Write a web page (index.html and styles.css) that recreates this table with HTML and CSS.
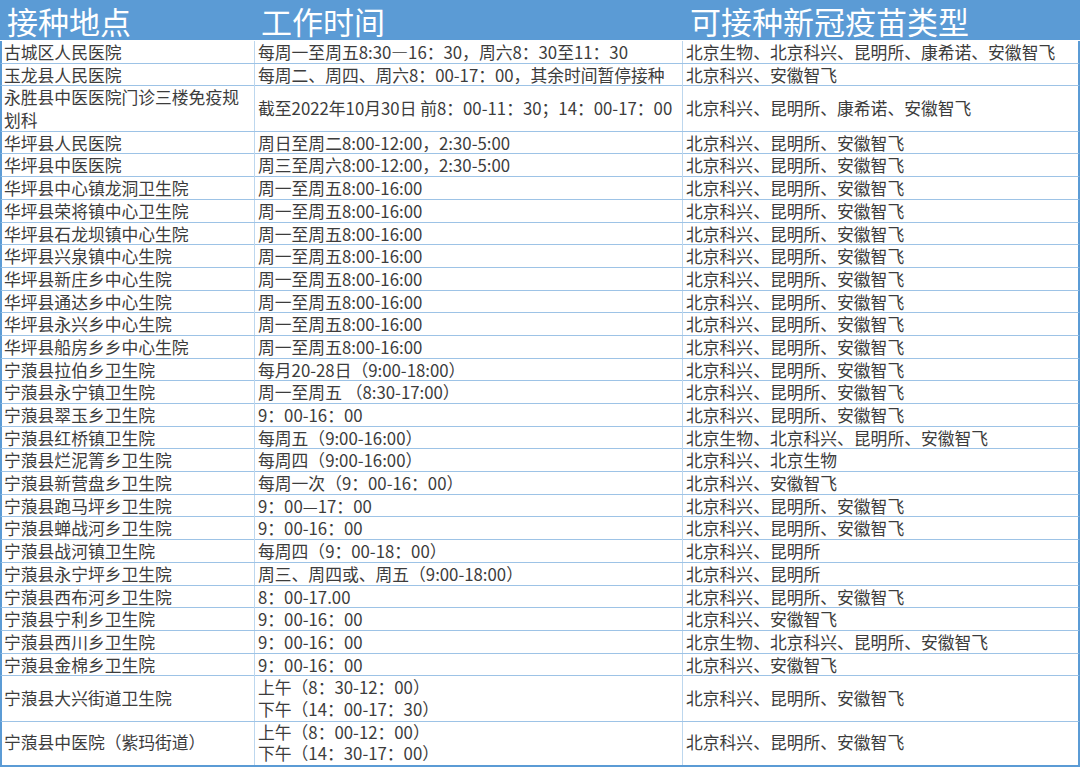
FILE: index.html
```html
<!DOCTYPE html>
<html lang="zh-CN">
<head>
<meta charset="utf-8">
<title>接种地点</title>
<link rel="stylesheet" href="styles.css">
</head>
<body>
<div class="sheet">
  <div class="row head">
    <div class="cell">接种地点</div>
    <div class="cell">工作时间</div>
    <div class="cell">可接种新冠疫苗类型</div>
  </div>
  <div class="row"><div class="cell">古城区人民医院</div><div class="cell">每周一至周五8:30—16：30，周六8：30至11：30</div><div class="cell">北京生物、北京科兴、昆明所、康希诺、安徽智飞</div></div>
  <div class="row"><div class="cell">玉龙县人民医院</div><div class="cell">每周二、周四、周六8：00-17：00，其余时间暂停接种</div><div class="cell">北京科兴、安徽智飞</div></div>
  <div class="row dbl"><div class="cell">永胜县中医医院门诊三楼免疫规<br>划科</div><div class="cell">截至2022年10月30日 前8：00-11：30；14：00-17：00</div><div class="cell">北京科兴、昆明所、康希诺、安徽智飞</div></div>
  <div class="row"><div class="cell">华坪县人民医院</div><div class="cell">周日至周二8:00-12:00，2:30-5:00</div><div class="cell">北京科兴、昆明所、安徽智飞</div></div>
  <div class="row"><div class="cell">华坪县中医医院</div><div class="cell">周三至周六8:00-12:00，2:30-5:00</div><div class="cell">北京科兴、昆明所、安徽智飞</div></div>
  <div class="row"><div class="cell">华坪县中心镇龙洞卫生院</div><div class="cell">周一至周五8:00-16:00</div><div class="cell">北京科兴、昆明所、安徽智飞</div></div>
  <div class="row"><div class="cell">华坪县荣将镇中心卫生院</div><div class="cell">周一至周五8:00-16:00</div><div class="cell">北京科兴、昆明所、安徽智飞</div></div>
  <div class="row"><div class="cell">华坪县石龙坝镇中心生院</div><div class="cell">周一至周五8:00-16:00</div><div class="cell">北京科兴、昆明所、安徽智飞</div></div>
  <div class="row"><div class="cell">华坪县兴泉镇中心生院</div><div class="cell">周一至周五8:00-16:00</div><div class="cell">北京科兴、昆明所、安徽智飞</div></div>
  <div class="row"><div class="cell">华坪县新庄乡中心生院</div><div class="cell">周一至周五8:00-16:00</div><div class="cell">北京科兴、昆明所、安徽智飞</div></div>
  <div class="row"><div class="cell">华坪县通达乡中心生院</div><div class="cell">周一至周五8:00-16:00</div><div class="cell">北京科兴、昆明所、安徽智飞</div></div>
  <div class="row"><div class="cell">华坪县永兴乡中心生院</div><div class="cell">周一至周五8:00-16:00</div><div class="cell">北京科兴、昆明所、安徽智飞</div></div>
  <div class="row"><div class="cell">华坪县船房乡乡中心生院</div><div class="cell">周一至周五8:00-16:00</div><div class="cell">北京科兴、昆明所、安徽智飞</div></div>
  <div class="row"><div class="cell">宁蒗县拉伯乡卫生院</div><div class="cell">每月20-28日（9:00-18:00）</div><div class="cell">北京科兴、昆明所、安徽智飞</div></div>
  <div class="row"><div class="cell">宁蒗县永宁镇卫生院</div><div class="cell">周一至周五 （8:30-17:00）</div><div class="cell">北京科兴、昆明所、安徽智飞</div></div>
  <div class="row"><div class="cell">宁蒗县翠玉乡卫生院</div><div class="cell">9：00-16：00</div><div class="cell">北京科兴、昆明所、安徽智飞</div></div>
  <div class="row"><div class="cell">宁蒗县红桥镇卫生院</div><div class="cell">每周五（9:00-16:00）</div><div class="cell">北京生物、北京科兴、昆明所、安徽智飞</div></div>
  <div class="row"><div class="cell">宁蒗县烂泥箐乡卫生院</div><div class="cell">每周四（9:00-16:00）</div><div class="cell">北京科兴、北京生物</div></div>
  <div class="row"><div class="cell">宁蒗县新营盘乡卫生院</div><div class="cell">每周一次（9：00-16：00）</div><div class="cell">北京科兴、安徽智飞</div></div>
  <div class="row"><div class="cell">宁蒗县跑马坪乡卫生院</div><div class="cell">9：00—17：00</div><div class="cell">北京科兴、昆明所、安徽智飞</div></div>
  <div class="row"><div class="cell">宁蒗县蝉战河乡卫生院</div><div class="cell">9：00-16：00</div><div class="cell">北京科兴、昆明所、安徽智飞</div></div>
  <div class="row"><div class="cell">宁蒗县战河镇卫生院</div><div class="cell">每周四（9：00-18：00）</div><div class="cell">北京科兴、昆明所</div></div>
  <div class="row"><div class="cell">宁蒗县永宁坪乡卫生院</div><div class="cell">周三、周四或、周五（9:00-18:00）</div><div class="cell">北京科兴、昆明所</div></div>
  <div class="row"><div class="cell">宁蒗县西布河乡卫生院</div><div class="cell">8：00-17.00</div><div class="cell">北京科兴、昆明所、安徽智飞</div></div>
  <div class="row"><div class="cell">宁蒗县宁利乡卫生院</div><div class="cell">9：00-16：00</div><div class="cell">北京科兴、安徽智飞</div></div>
  <div class="row"><div class="cell">宁蒗县西川乡卫生院</div><div class="cell">9：00-16：00</div><div class="cell">北京生物、北京科兴、昆明所、安徽智飞</div></div>
  <div class="row"><div class="cell">宁蒗县金棉乡卫生院</div><div class="cell">9：00-16：00</div><div class="cell">北京科兴、安徽智飞</div></div>
  <div class="row dbl"><div class="cell">宁蒗县大兴街道卫生院</div><div class="cell">上午（8：30-12：00）<br>下午（14：00-17：30）</div><div class="cell">北京科兴、昆明所、安徽智飞</div></div>
  <div class="row dbl last"><div class="cell">宁蒗县中医院（紫玛街道）</div><div class="cell">上午（8：00-12：00）<br>下午（14：30-17：00）</div><div class="cell">北京科兴、昆明所、安徽智飞</div></div>
</div>
</body>
</html>
```

FILE: styles.css
```css
html, body {
  margin: 0;
  padding: 0;
  background: #ffffff;
}

body {
  width: 1080px;
  height: 768px;
  overflow: hidden;
  font-family: "Noto Sans CJK SC", "Noto Sans", sans-serif;
}

.sheet {
  width: 1080px;
  display: flex;
  flex-direction: column;
}

.row {
  display: grid;
  grid-template-columns: 253px 428px 1fr;
  box-sizing: border-box;
  height: 22.7px;
  border-bottom: 1px solid #9dc3e6;
  border-left: 2px solid #5b9bd5;
  border-right: 2px solid #5b9bd5;
}

.row.dbl {
  height: 45.4px;
}

.row.last {
  height: 45px;
  border-bottom: 2px solid #5b9bd5;
}

.cell {
  display: flex;
  flex-direction: column;
  justify-content: center;
  padding: 0 3px;
  font-size: 16.8px;
  line-height: 22.2px;
  color: #3c3c3c;
  white-space: nowrap;
  border-right: 1px solid #bdd7ee;
}

.row.last .cell {
  line-height: 21.5px;
}

.cell:first-child {
  padding-left: 2px;
}

.cell:last-child {
  border-right: none;
}

.row.head {
  height: 41px;
  background: #5b9bd5;
  border: none;
  border-bottom: 1px solid #ffffff;
  grid-template-columns: 255px 428px 1fr;
}

.row.head .cell {
  padding: 2px 0 0 7px;
  font-size: 31px;
  line-height: 36px;
  color: #ffffff;
  border-right: none;
}

.row.head .cell:nth-child(2) {
  padding-left: 6px;
}
```
